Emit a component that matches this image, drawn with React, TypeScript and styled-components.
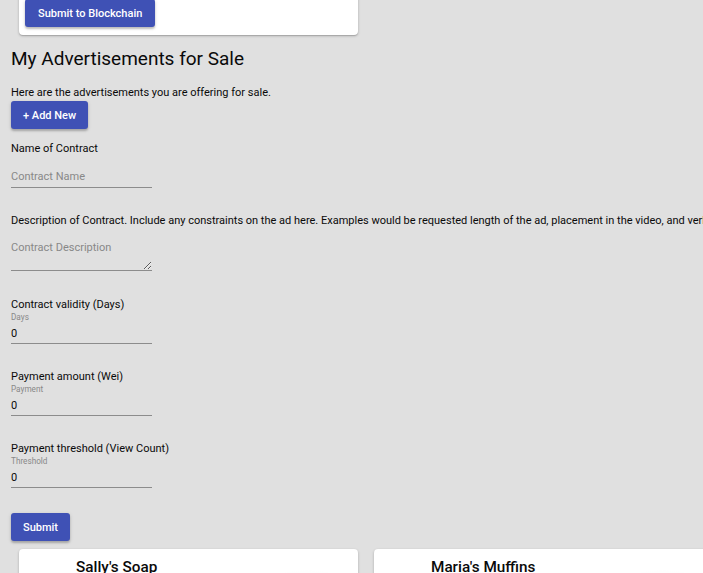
import styled, { createGlobalStyle } from 'styled-components';

const GlobalStyle = createGlobalStyle`
  html, body {
    margin: 0;
    padding: 0;
    background-color: #e0e0e0;
    overflow: hidden;
  }

  body {
    font-family: Roboto, "Liberation Sans", Arial, sans-serif;
    color: #000;
  }
`;

const Page = styled.div`
  display: flex;
  flex-direction: column;
  width: 100%;
`;

const TopCard = styled.div`
  margin: -12px 0 0 19px;
  width: 339px;
  padding: 11px 6px 8px;
  box-sizing: border-box;
  background-color: #fff;
  border-radius: 4px;
  box-shadow: 0 1px 3px rgba(0, 0, 0, 0.2), 0 1px 1px rgba(0, 0, 0, 0.14);
`;

const Button = styled.button<{ $wide?: boolean }>`
  display: inline-flex;
  align-items: center;
  justify-content: center;
  height: 28px;
  padding: 0 ${(p) => (p.$wide ? '13px' : '12px')};
  border: none;
  border-radius: 3px;
  background-color: #3f51b5;
  color: #fff;
  font-family: Roboto, "Liberation Sans", Arial, sans-serif;
  font-size: 11px;
  font-weight: 500;
  box-shadow: 0 2px 2px rgba(0, 0, 0, 0.2), 0 1px 4px rgba(0, 0, 0, 0.12);
  cursor: pointer;
  align-self: flex-start;
`;

const Section = styled.div`
  display: flex;
  flex-direction: column;
  padding: 0 11px;
`;

const Title = styled.h2`
  margin: 12px 0 0;
  font-size: 19px;
  line-height: 24px;
  font-weight: 400;
  color: #0a0a0a;
`;

const Intro = styled.p`
  margin: 15px 0 0;
  font-size: 11px;
  line-height: 14px;
  color: #0a0a0a;
`;

const Label = styled.div<{ $gap: number }>`
  margin-top: ${(p) => p.$gap}px;
  font-size: 11px;
  line-height: 14px;
  color: #0a0a0a;
  white-space: nowrap;
`;

const Hint = styled.div`
  font-size: 8.2px;
  line-height: 10px;
  color: #888;
`;

const Input = styled.input<{ $gap: number; $h: number }>`
  margin-top: ${(p) => p.$gap}px;
  width: 141px;
  height: ${(p) => p.$h}px;
  box-sizing: border-box;
  padding: 0;
  border: none;
  border-bottom: 1px solid #8c8c8c;
  background: transparent;
  font-family: Roboto, "Liberation Sans", Arial, sans-serif;
  font-size: 11px;
  color: #0a0a0a;
  outline: none;

  &::placeholder {
    color: #888;
  }
`;

const TextArea = styled.textarea`
  margin-top: 11px;
  width: 141px;
  height: 32px;
  box-sizing: border-box;
  padding: 2px 0 0;
  border: none;
  border-bottom: 1px solid #8c8c8c;
  background: transparent;
  font-family: Roboto, "Liberation Sans", Arial, sans-serif;
  font-size: 11px;
  line-height: 14px;
  outline: none;
  resize: vertical;

  &::placeholder {
    color: #888;
  }
`;

const CardRow = styled.div`
  display: flex;
  gap: 16px;
  margin: 8px 0 0 19px;
`;

const AdCard = styled.div`
  flex: 0 0 339px;
  height: 60px;
  padding: 9px 0 0 57px;
  box-sizing: border-box;
  background:
    radial-gradient(ellipse 70px 40px at 85% 100%, rgba(0, 0, 0, 0.06), transparent),
    #fff;
  border-radius: 4px;
  box-shadow: 0 1px 3px rgba(0, 0, 0, 0.2), 0 1px 1px rgba(0, 0, 0, 0.14);
`;

const AdTitle = styled.div`
  font-size: 15.3px;
  line-height: 18px;
  font-weight: 500;
  color: #0a0a0a;
`;

interface INumberField {
  label: string;
  hint: string;
  gap: number;
}

function NumberField({ label, hint, gap }: INumberField) {
  return (
    <>
      <Label $gap={gap}>{label}</Label>
      <Hint>{hint}</Hint>
      <Input $gap={1} $h={21} type="text" defaultValue="0" />
    </>
  );
}

export default function App() {
  const ads = ["Sally's Soap", "Maria's Muffins"];

  return (
    <Page>
      <GlobalStyle />
      <TopCard>
        <Button $wide>Submit to Blockchain</Button>
      </TopCard>
      <Section>
        <Title>My Advertisements for Sale</Title>
        <Intro>Here are the advertisements you are offering for sale.</Intro>
        <Button style={{ marginTop: 1 }}>+ Add New</Button>
        <Label $gap={13}>Name of Contract</Label>
        <Input $gap={9} $h={23} type="text" placeholder="Contract Name" />
        <Label $gap={26}>
          Description of Contract. Include any constraints on the ad here. Examples would be
          requested length of the ad, placement in the video, and verbal mentions.
        </Label>
        <TextArea placeholder="Contract Description" />
        <NumberField label="Contract validity (Days)" hint="Days" gap={27} />
        <NumberField label="Payment amount (Wei)" hint="Payment" gap={26} />
        <NumberField label="Payment threshold (View Count)" hint="Threshold" gap={26} />
        <Button style={{ marginTop: 25 }}>Submit</Button>
      </Section>
      <CardRow>
        {ads.map((name) => (
          <AdCard key={name}>
            <AdTitle>{name}</AdTitle>
          </AdCard>
        ))}
      </CardRow>
    </Page>
  );
}
